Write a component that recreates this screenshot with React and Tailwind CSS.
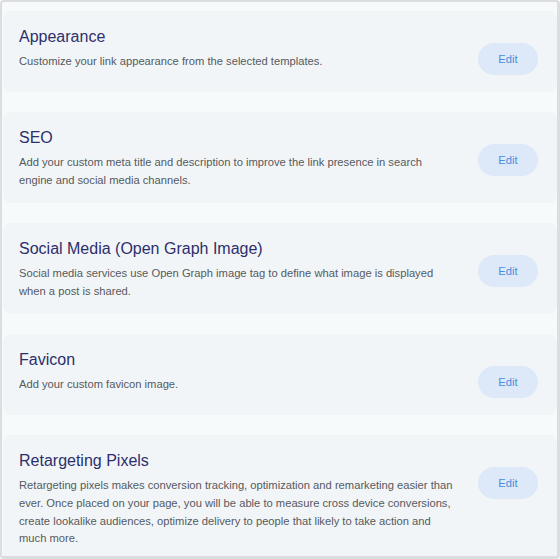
import React from 'react';

const sections = [
    {
        title: 'Appearance',
        text: 'Customize your link appearance from the selected templates.',
    },
    {
        title: 'SEO',
        text: 'Add your custom meta title and description to improve the link presence in search engine and social media channels.',
    },
    {
        title: 'Social Media (Open Graph Image)',
        text: 'Social media services use Open Graph image tag to define what image is displayed when a post is shared.',
    },
    {
        title: 'Favicon',
        text: 'Add your custom favicon image.',
    },
    {
        title: 'Retargeting Pixels',
        text: 'Retargeting pixels makes conversion tracking, optimization and remarketing easier than ever. Once placed on your page, you will be able to measure cross device conversions, create lookalike audiences, optimize delivery to people that likely to take action and much more.',
    },
];

function SettingCard({ title, text }) {
    return (
        <div className="shrink-0 rounded-lg bg-[#f2f5f7] pl-4 pr-[19px] pt-[14px] pb-[14px]">
            <h3 className="text-[16px] leading-6 text-[#2c2f6c] mb-1">{title}</h3>
            <div className="flex items-start min-h-[25px]">
                <p className="flex-1 text-[11.2px] leading-[17.6px] text-[#555a60]">{text}</p>
                <button className="ml-6 -mt-[10px] h-8 w-[60px] shrink-0 rounded-full bg-[#dde9f8] text-[11.2px] text-[#4a8ee0]">
                    Edit
                </button>
            </div>
        </div>
    );
}

export default function App() {
    return (
        <div
            className="w-[560px] h-[559px] overflow-hidden rounded-[4px] border-2 border-r-[3px] border-b-[3px] border-[#dcdddf] bg-[#f7fafb]"
            style={{ fontFamily: '"Liberation Sans", Arial, sans-serif' }}
        >
            <div className="flex flex-col gap-5 pl-px pt-[9px]">
                {sections.map((s) => (
                    <SettingCard key={s.title} title={s.title} text={s.text} />
                ))}
            </div>
        </div>
    );
}
